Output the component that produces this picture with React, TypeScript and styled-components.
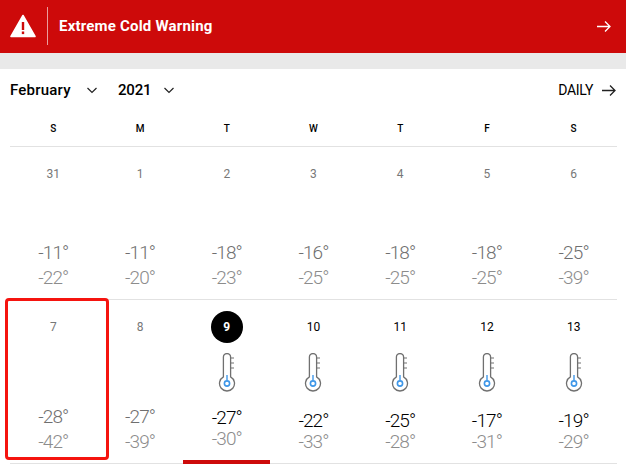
import React from "react";
import styled, { createGlobalStyle } from "styled-components";

const Global = createGlobalStyle`
  html, body { margin: 0; padding: 0; background: #fff; }
  body { font-family: Roboto, "Liberation Sans", sans-serif; color: #000; }
`;

const Page = styled.div`
  position: relative;
  width: 626px;
  height: 465px;
  overflow: hidden;
  background: #fff;
`;

const Banner = styled.div`
  height: 53px;
  background: #cd0a0a;
  display: flex;
  align-items: center;
  color: #fff;
  padding: 0 15px 0 10px;
`;

const AlertWrap = styled.div`
  width: 37px;
  height: 38px;
  display: flex;
  align-items: center;
  border-right: 1px solid rgba(255, 255, 255, 0.6);
  margin-top: -1px;
  flex: none;
  margin-right: 11px;
`;

const BannerTitle = styled.div`
  flex: 1;
  font-size: 15px;
  font-weight: 700;
  letter-spacing: 0.2px;
  margin-top: -1px;
`;

const Gap = styled.div`
  height: 16px;
  background: #e9e9e9;
`;

const Controls = styled.div`
  height: 42px;
  display: flex;
  align-items: center;
  padding: 0 10px;
`;

const Picker = styled.div<{ $w: number; $gap?: number; $spacing?: number }>`
  width: ${(p) => p.$w}px;
  margin-left: ${(p) => p.$gap ?? 0}px;
  display: flex;
  align-items: center;
  justify-content: space-between;
  font-size: 15px;
  font-weight: 500;
  letter-spacing: ${(p) => p.$spacing ?? 0.2}px;
`;

const Spacer = styled.div`
  flex: 1;
`;

const DailyLink = styled.div`
  display: flex;
  align-items: center;
  gap: 9px;
  font-size: 14px;
  font-weight: 400;
  letter-spacing: -0.3px;
`;

const Grid = styled.div`
  margin: 0 9px 0 10px;
`;

const Row = styled.div<{ $h: number }>`
  height: ${(p) => p.$h}px;
  display: grid;
  grid-template-columns: repeat(7, 1fr);
  box-sizing: border-box;
  border-bottom: 1px solid #e2e2e2;
`;

const DayLabel = styled.div`
  text-align: center;
  font-size: 10px;
  font-weight: 500;
  padding-top: 12px;
`;

const Cell = styled.div`
  position: relative;
  display: flex;
  flex-direction: column;
  align-items: center;
`;

const DateRow = styled.div`
  height: 30px;
  margin-top: 12px;
  display: flex;
  align-items: center;
  justify-content: center;
`;

const DateNum = styled.div<{ $past?: boolean; $today?: boolean }>`
  width: 32px;
  height: 32px;
  border-radius: 50%;
  display: flex;
  align-items: center;
  justify-content: center;
  font-size: 12px;
  font-weight: ${(p) => (p.$today ? 700 : 400)};
  color: ${(p) => (p.$today ? "#fff" : p.$past ? "#777" : "#000")};
  background: ${(p) => (p.$today ? "#000" : "transparent")};
`;

const IconSlot = styled.div`
  height: 40px;
  margin-top: 11px;
  display: flex;
  align-items: flex-start;
  justify-content: center;
`;

const TempBlock = styled.div<{ $top: number; $lh: number }>`
  margin-top: ${(p) => p.$top}px;
  display: flex;
  flex-direction: column;
  align-items: center;
  font-size: 19px;
  line-height: ${(p) => p.$lh}px;
  font-weight: 300;
  letter-spacing: -0.9px;
`;

const High = styled.div<{ $past?: boolean }>`
  color: ${(p) => (p.$past ? "#6f6f6f" : "#000")};
`;

const Low = styled.div`
  color: #8c8c8c;
`;

const TodayBar = styled.div`
  position: absolute;
  left: 0;
  right: 0;
  bottom: -1px;
  height: 4px;
  background: #cd0a0a;
`;

const Highlight = styled.div`
  position: absolute;
  left: 5px;
  top: 298px;
  width: 98px;
  height: 156px;
  border: 3px solid #f5140f;
  border-radius: 4px;
  pointer-events: none;
`;

const AlertIcon = () => (
  <svg width="26" height="24" viewBox="0 0 26 24">
    <path d="M13 1.5 L25 22.5 H1 Z" fill="#fff" stroke="#fff" strokeWidth="1.6" strokeLinejoin="round" />
    <rect x="11.8" y="8" width="2.4" height="8" fill="#cd0a0a" />
    <rect x="11.8" y="17.5" width="2.4" height="2.6" fill="#cd0a0a" />
  </svg>
);

const Chevron = () => (
  <svg width="10" height="7" viewBox="0 0 10 7" fill="none" stroke="#222" strokeWidth="1.2">
    <path d="M0.5 1 L5 5.5 L9.5 1" />
  </svg>
);

const Arrow = ({ color }: { color: string }) => (
  <svg width="14" height="11" viewBox="0 0 14 11" fill="none" stroke={color} strokeWidth="1.3">
    <path d="M0 5.5 H13 M8 0.5 L13 5.5 L8 10.5" />
  </svg>
);

const Thermometer = () => (
  <svg width="18" height="40" viewBox="0 0 18 40" fill="none">
    <path
      d="M5.4 23.9 V4.1 a3.6 3.6 0 0 1 7.2 0 V23.9 A7.5 7.5 0 1 1 5.4 23.9 Z"
      stroke="#707070"
      strokeWidth="1.3"
    />
    <path d="M12.6 5 H16 M12.6 10 H16 M12.6 15 H16" stroke="#707070" strokeWidth="1.2" />
    <path d="M9 22 V27.5" stroke="#3f97e8" strokeWidth="1.4" />
    <circle cx="9" cy="30.5" r="2.6" stroke="#3f97e8" strokeWidth="1.6" />
  </svg>
);

const days = ["S", "M", "T", "W", "T", "F", "S"];
const week1 = [
  ["31", "-11°", "-22°"],
  ["1", "-11°", "-20°"],
  ["2", "-18°", "-23°"],
  ["3", "-16°", "-25°"],
  ["4", "-18°", "-25°"],
  ["5", "-18°", "-25°"],
  ["6", "-25°", "-39°"],
];
const week2 = [
  ["7", "-28°", "-42°"],
  ["8", "-27°", "-39°"],
  ["9", "-27°", "-30°"],
  ["10", "-22°", "-33°"],
  ["11", "-25°", "-28°"],
  ["12", "-17°", "-31°"],
  ["13", "-19°", "-29°"],
];

export default function App() {
  return (
    <Page>
      <Global />
      <Banner>
        <AlertWrap>
          <AlertIcon />
        </AlertWrap>
        <BannerTitle>Extreme Cold Warning</BannerTitle>
        <Arrow color="#fff" />
      </Banner>
      <Gap />
      <Controls>
        <Picker $w={87}>
          February <Chevron />
        </Picker>
        <Picker $w={56} $gap={21} $spacing={-0.2}>
          2021 <Chevron />
        </Picker>
        <Spacer />
        <DailyLink>
          DAILY <Arrow color="#222" />
        </DailyLink>
      </Controls>
      <Grid>
        <Row $h={36}>
          {days.map((d, i) => (
            <DayLabel key={i}>{d}</DayLabel>
          ))}
        </Row>
        <Row $h={153}>
          {week1.map(([n, h, l]) => (
            <Cell key={n}>
              <DateRow>
                <DateNum $past>{n}</DateNum>
              </DateRow>
              <TempBlock $top={51} $lh={25}>
                <High $past>{h}</High>
                <Low>{l}</Low>
              </TempBlock>
            </Cell>
          ))}
        </Row>
        <Row $h={164}>
          {week2.map(([n, h, l], i) => {
            const past = i < 2;
            return (
              <Cell key={n}>
                <DateRow>
                  <DateNum $past={past} $today={i === 2}>
                    {n}
                  </DateNum>
                </DateRow>
                {past ? (
                  <TempBlock $top={62} $lh={25}>
                    <High $past>{h}</High>
                    <Low>{l}</Low>
                  </TempBlock>
                ) : (
                  <>
                    <IconSlot>
                      <Thermometer />
                    </IconSlot>
                    <TempBlock $top={i === 2 ? 14 : 17} $lh={21}>
                      <High>{h}</High>
                      <Low>{l}</Low>
                    </TempBlock>
                  </>
                )}
                {i === 2 && <TodayBar />}
              </Cell>
            );
          })}
        </Row>
      </Grid>
      <Highlight />
    </Page>
  );
}
